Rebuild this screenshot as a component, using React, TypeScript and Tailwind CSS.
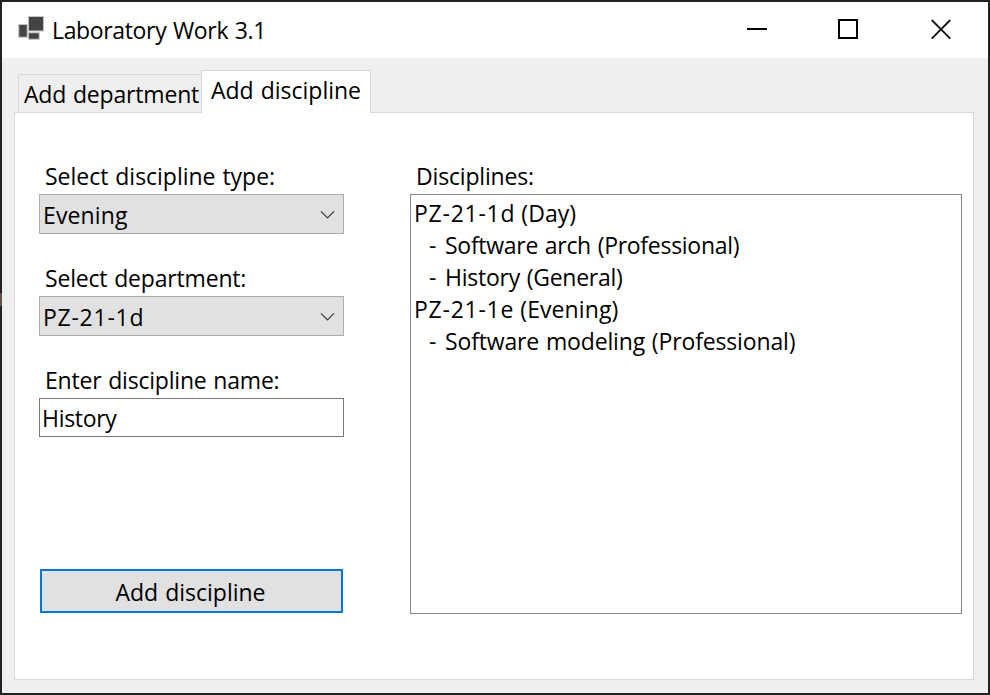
import type { ReactNode } from "react";

function AppIcon() {
  return (
    <svg className="ml-4 mt-3 shrink-0" width="28" height="28" viewBox="0 0 28 28">
      <g fill="#444444" stroke="#c4c4c4" strokeWidth="1">
        <rect x="10.5" y="2.5" width="15" height="14.5" />
        <rect x="0.8" y="10.5" width="8.4" height="12.7" />
        <rect x="10.5" y="18.8" width="10.7" height="6.4" />
      </g>
    </svg>
  );
}

function TitleBar() {
  return (
    <header className="flex h-14 shrink-0 bg-white">
      <AppIcon />
      <h1 className="ml-1.5 mt-3 flex-1 tracking-[-0.35px] [word-spacing:1px]">Laboratory Work 3.1</h1>
      <div className="flex pt-[17px]">
        <button aria-label="Minimize" className="mr-[71px] h-5 w-5">
          <span className="block h-0.5 w-5 bg-black" />
        </button>
        <button aria-label="Maximize" className="mr-[72px] h-5 w-5 border-2 border-black" />
        <button aria-label="Close" className="mr-[36px] h-[21px] w-[22px]">
          <svg width="22" height="21" viewBox="0 0 22 21" stroke="#111" strokeWidth="1.8">
            <path d="M1.7 1 20.3 19.6M20.3 1 1.7 19.6" />
          </svg>
        </button>
      </div>
    </header>
  );
}

function Label({ className, children }: { className: string; children: ReactNode }) {
  return <div className={`h-[34px] pl-[6px] [word-spacing:1px] ${className}`}>{children}</div>;
}

function Combo({ className, children }: { className: string; children: ReactNode }) {
  return (
    <div className="flex h-10 justify-between border border-[#adadad] bg-[#e1e1e1] pl-[3px] pr-2">
      <span className={`mt-1 ${className}`}>{children}</span>
      <svg className="mt-[15px]" width="15" height="10" viewBox="0 0 15 10" fill="none" stroke="#404040" strokeWidth="1.3">
        <path d="M1 1.4 7.5 7.9 14 1.4" />
      </svg>
    </div>
  );
}

function Group({ code, type, className }: { code: string; type: string; className: string }) {
  return (
    <div className="pl-0.5">
      <span className="tracking-[0.75px]">{code}</span>
      <span className={className}> {type}</span>
    </div>
  );
}

function Discipline({ className, children }: { className: string; children: ReactNode }) {
  return (
    <div className="flex pl-[17px] [word-spacing:1px]">
      <span className="w-4">-</span>
      <span className={className}>{children}</span>
    </div>
  );
}

export default function App() {
  return (
    <div className="h-[695px] w-[990px] bg-[linear-gradient(#222_293px,#63504a_293px,#63504a_306px,#222_306px)] pl-0.5 font-['Open_Sans','Noto_Sans',sans-serif] text-[23px] leading-8 text-black">
      <div className="flex h-full w-full flex-col whitespace-nowrap border-y-2 border-r-2 border-[#222] bg-[#efefef]">
        <TitleBar />
        <nav className="flex h-[54px] shrink-0 pl-4 pt-3">
          <div className="mt-1 h-[38px] w-[183px] border border-b-0 border-r-0 border-[#d9d9d9] pl-[5px] pt-[3px] tracking-[-0.18px] [word-spacing:1px]">
            Add department
          </div>
          <div className="relative h-[43px] w-[170px] border border-b-0 border-[#d9d9d9] bg-white pl-[9px] pt-[3px] [word-spacing:1px]">
            Add discipline
          </div>
        </nav>
        <main className="ml-3 flex h-[568px] w-[960px] border border-[#d9d9d9] bg-white pl-6 pt-[47px]">
          <section className="w-[305px]">
            <Label className="tracking-[-0.02px]">Select discipline type:</Label>
            <Combo className="tracking-[0.13px]">Evening</Combo>
            <div className="h-7" />
            <Label className="tracking-[-0.18px]">Select department:</Label>
            <Combo className="tracking-[0.74px]">PZ-21-1d</Combo>
            <div className="h-7" />
            <Label className="tracking-[-0.2px]">Enter discipline name:</Label>
            <div className="h-[39px] border border-[#7a7a7a] pl-0.5 pt-[3px] tracking-[-0.3px]">History</div>
            <button className="mx-px mt-[132px] flex h-11 w-[303px] justify-center border-2 border-[#0078d7] bg-[#e1e1e1] pr-0.5 pt-[5px] [word-spacing:1px]">
              Add discipline
            </button>
          </section>
          <section className="ml-[66px] w-[552px]">
            <Label className="tracking-[-0.17px]">Disciplines:</Label>
            <div className="h-[420px] border border-[#828790] pl-px pt-0.5">
              <Group code="PZ-21-1d" type="(Day)" className="tracking-[0.05px]" />
              <Discipline className="tracking-[-0.28px]">Software arch (Professional)</Discipline>
              <Discipline className="tracking-[-0.25px]">History (General)</Discipline>
              <Group code="PZ-21-1e" type="(Evening)" className="tracking-[0.1px]" />
              <Discipline className="tracking-[-0.15px]">Software modeling (Professional)</Discipline>
            </div>
          </section>
        </main>
      </div>
    </div>
  );
}
